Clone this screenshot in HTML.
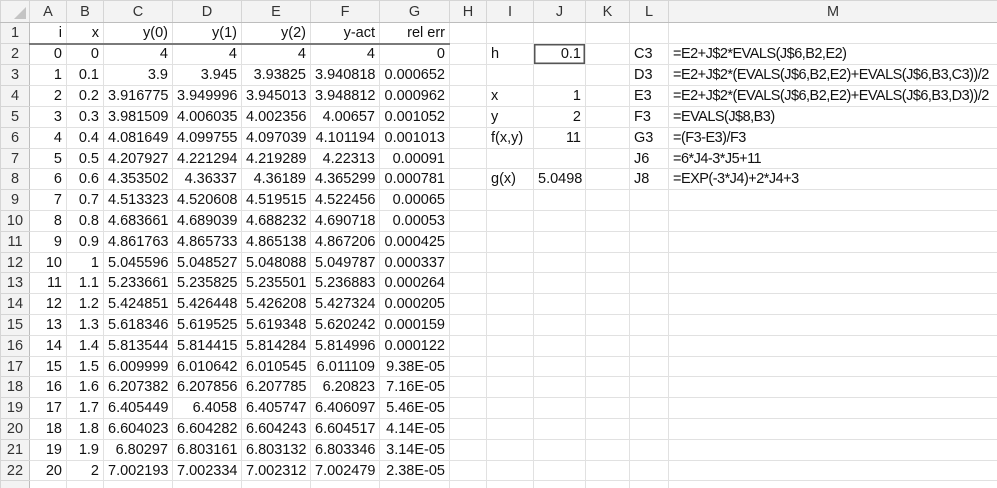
<!DOCTYPE html>
<html><head><meta charset="utf-8"><style>
html,body{margin:0;padding:0;background:#fff;width:997px;height:488px;overflow:hidden}
table{border-collapse:collapse;table-layout:fixed;width:997px;font-family:"Liberation Sans",sans-serif;font-size:14.5px;color:#111}
td{border:1px solid #e1e1e1;padding:0 4px;white-space:nowrap;overflow:hidden;text-align:right;line-height:18px;box-sizing:border-box}
tr.hd td{background:#f3f3f3;color:#333;text-align:center;border-color:#d5d5d5;border-bottom:1px solid #bdbdbd}
td.rh{background:#f3f3f3;color:#333;text-align:center;border-color:#d5d5d5;border-right:1px solid #bdbdbd;padding:0}
td.l{text-align:left}
td.m{text-align:left;letter-spacing:-0.52px}
tr.r1 td.b{border-bottom:2px solid #7a7a7a}
td.box{box-shadow:inset 0 0 0 1.5px #555}
</style></head><body>
<table>
<colgroup><col style="width:29px"><col style="width:37px"><col style="width:37px"><col style="width:69px"><col style="width:69px"><col style="width:69px"><col style="width:69px"><col style="width:70px"><col style="width:37px"><col style="width:47px"><col style="width:52px"><col style="width:44px"><col style="width:39px"><col style="width:329px"></colgroup>
<tr class="hd" style="height:22px"><td style="position:relative"><svg width="14" height="14" style="position:absolute;right:2px;bottom:2px"><polygon points="13,1 13,13 1,13" fill="#c4c4c4"/></svg></td><td>A</td><td>B</td><td>C</td><td>D</td><td>E</td><td>F</td><td>G</td><td>H</td><td>I</td><td>J</td><td>K</td><td>L</td><td>M</td></tr>
<tr class="r1" style="height:21px"><td class="rh">1</td><td class="b">i</td><td class="b">x</td><td class="b">y(0)</td><td class="b">y(1)</td><td class="b">y(2)</td><td class="b">y-act</td><td class="b">rel err</td><td></td><td></td><td></td><td></td><td></td><td></td></tr>
<tr style="height:21px"><td class="rh">2</td><td>0</td><td>0</td><td>4</td><td>4</td><td>4</td><td>4</td><td>0</td><td></td><td class="l">h</td><td class="box">0.1</td><td></td><td class="l">C3</td><td class="m">=E2+J$2*EVALS(J$6,B2,E2)</td></tr>
<tr style="height:21px"><td class="rh">3</td><td>1</td><td>0.1</td><td>3.9</td><td>3.945</td><td>3.93825</td><td>3.940818</td><td>0.000652</td><td></td><td></td><td></td><td></td><td class="l">D3</td><td class="m">=E2+J$2*(EVALS(J$6,B2,E2)+EVALS(J$6,B3,C3))/2</td></tr>
<tr style="height:21px"><td class="rh">4</td><td>2</td><td>0.2</td><td>3.916775</td><td>3.949996</td><td>3.945013</td><td>3.948812</td><td>0.000962</td><td></td><td class="l">x</td><td>1</td><td></td><td class="l">E3</td><td class="m">=E2+J$2*(EVALS(J$6,B2,E2)+EVALS(J$6,B3,D3))/2</td></tr>
<tr style="height:21px"><td class="rh">5</td><td>3</td><td>0.3</td><td>3.981509</td><td>4.006035</td><td>4.002356</td><td>4.00657</td><td>0.001052</td><td></td><td class="l">y</td><td>2</td><td></td><td class="l">F3</td><td class="m">=EVALS(J$8,B3)</td></tr>
<tr style="height:21px"><td class="rh">6</td><td>4</td><td>0.4</td><td>4.081649</td><td>4.099755</td><td>4.097039</td><td>4.101194</td><td>0.001013</td><td></td><td class="l">f(x,y)</td><td>11</td><td></td><td class="l">G3</td><td class="m">=(F3-E3)/F3</td></tr>
<tr style="height:20px"><td class="rh">7</td><td>5</td><td>0.5</td><td>4.207927</td><td>4.221294</td><td>4.219289</td><td>4.22313</td><td>0.00091</td><td></td><td></td><td></td><td></td><td class="l">J6</td><td class="m">=6*J4-3*J5+11</td></tr>
<tr style="height:21px"><td class="rh">8</td><td>6</td><td>0.6</td><td>4.353502</td><td>4.36337</td><td>4.36189</td><td>4.365299</td><td>0.000781</td><td></td><td class="l">g(x)</td><td>5.0498</td><td></td><td class="l">J8</td><td class="m">=EXP(-3*J4)+2*J4+3</td></tr>
<tr style="height:21px"><td class="rh">9</td><td>7</td><td>0.7</td><td>4.513323</td><td>4.520608</td><td>4.519515</td><td>4.522456</td><td>0.00065</td><td></td><td></td><td></td><td></td><td></td><td></td></tr>
<tr style="height:21px"><td class="rh">10</td><td>8</td><td>0.8</td><td>4.683661</td><td>4.689039</td><td>4.688232</td><td>4.690718</td><td>0.00053</td><td></td><td></td><td></td><td></td><td></td><td></td></tr>
<tr style="height:21px"><td class="rh">11</td><td>9</td><td>0.9</td><td>4.861763</td><td>4.865733</td><td>4.865138</td><td>4.867206</td><td>0.000425</td><td></td><td></td><td></td><td></td><td></td><td></td></tr>
<tr style="height:20px"><td class="rh">12</td><td>10</td><td>1</td><td>5.045596</td><td>5.048527</td><td>5.048088</td><td>5.049787</td><td>0.000337</td><td></td><td></td><td></td><td></td><td></td><td></td></tr>
<tr style="height:21px"><td class="rh">13</td><td>11</td><td>1.1</td><td>5.233661</td><td>5.235825</td><td>5.235501</td><td>5.236883</td><td>0.000264</td><td></td><td></td><td></td><td></td><td></td><td></td></tr>
<tr style="height:21px"><td class="rh">14</td><td>12</td><td>1.2</td><td>5.424851</td><td>5.426448</td><td>5.426208</td><td>5.427324</td><td>0.000205</td><td></td><td></td><td></td><td></td><td></td><td></td></tr>
<tr style="height:21px"><td class="rh">15</td><td>13</td><td>1.3</td><td>5.618346</td><td>5.619525</td><td>5.619348</td><td>5.620242</td><td>0.000159</td><td></td><td></td><td></td><td></td><td></td><td></td></tr>
<tr style="height:21px"><td class="rh">16</td><td>14</td><td>1.4</td><td>5.813544</td><td>5.814415</td><td>5.814284</td><td>5.814996</td><td>0.000122</td><td></td><td></td><td></td><td></td><td></td><td></td></tr>
<tr style="height:20px"><td class="rh">17</td><td>15</td><td>1.5</td><td>6.009999</td><td>6.010642</td><td>6.010545</td><td>6.011109</td><td>9.38E-05</td><td></td><td></td><td></td><td></td><td></td><td></td></tr>
<tr style="height:21px"><td class="rh">18</td><td>16</td><td>1.6</td><td>6.207382</td><td>6.207856</td><td>6.207785</td><td>6.20823</td><td>7.16E-05</td><td></td><td></td><td></td><td></td><td></td><td></td></tr>
<tr style="height:21px"><td class="rh">19</td><td>17</td><td>1.7</td><td>6.405449</td><td>6.4058</td><td>6.405747</td><td>6.406097</td><td>5.46E-05</td><td></td><td></td><td></td><td></td><td></td><td></td></tr>
<tr style="height:21px"><td class="rh">20</td><td>18</td><td>1.8</td><td>6.604023</td><td>6.604282</td><td>6.604243</td><td>6.604517</td><td>4.14E-05</td><td></td><td></td><td></td><td></td><td></td><td></td></tr>
<tr style="height:21px"><td class="rh">21</td><td>19</td><td>1.9</td><td>6.80297</td><td>6.803161</td><td>6.803132</td><td>6.803346</td><td>3.14E-05</td><td></td><td></td><td></td><td></td><td></td><td></td></tr>
<tr style="height:20px"><td class="rh">22</td><td>20</td><td>2</td><td>7.002193</td><td>7.002334</td><td>7.002312</td><td>7.002479</td><td>2.38E-05</td><td></td><td></td><td></td><td></td><td></td><td></td></tr>
<tr style="height:21px"><td class="rh"></td><td></td><td></td><td></td><td></td><td></td><td></td><td></td><td></td><td></td><td></td><td></td><td></td><td></td></tr>
</table>
</body></html>
